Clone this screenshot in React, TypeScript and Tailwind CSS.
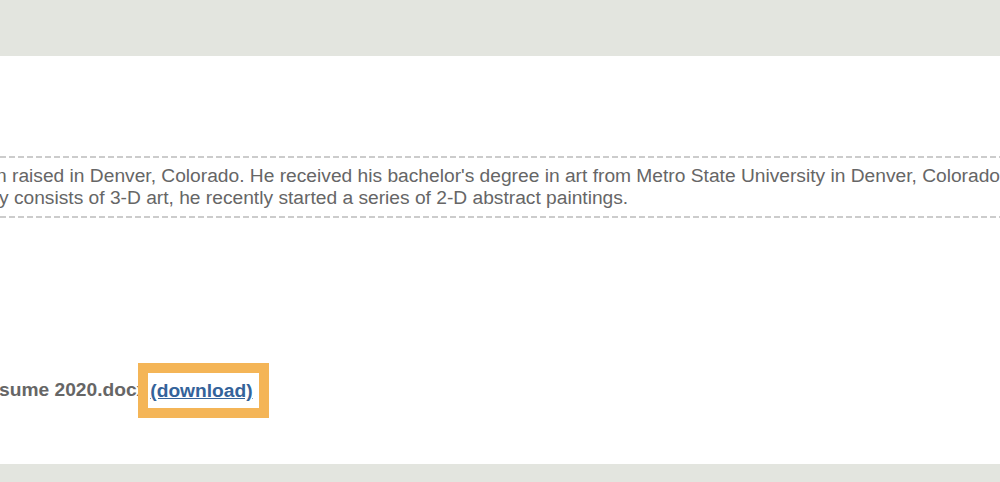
import React from 'react';

export default function App() {
  return (
    <div className="flex h-[482px] w-[1000px] flex-col overflow-hidden bg-[#e3e5df] font-['Liberation_Sans',Arial,sans-serif] text-[#666666]">
      <div className="h-[56px] shrink-0" />
      <div className="flex h-[408px] shrink-0 flex-col overflow-hidden bg-white">
        <div className="h-[100px] shrink-0" />
        <div className="h-[2px] bg-[repeating-linear-gradient(90deg,#cccccc_0_6px,transparent_6px_9px)]" />
        <div className="py-[7px] text-[19.2px] leading-[22px]">
          <div className="-ml-[4px] whitespace-nowrap">
            n raised in Denver, Colorado. He received his bachelor's degree in art from Metro State University in Denver, Colorado.
          </div>
          <div className="-ml-[1px] whitespace-nowrap">
            y consists of 3-D art, he recently started a series of 2-D abstract paintings.
          </div>
        </div>
        <div className="h-[2px] bg-[repeating-linear-gradient(90deg,#cccccc_0_6px,transparent_6px_9px)]" />
        <div className="mt-[145px] flex items-center whitespace-nowrap text-[19.2px] font-bold">
          <span className="-ml-[1px]">sume 2020.docx</span>
          <span className="-ml-[9px] border-[10px] border-[#f4b557] bg-white pl-[2px] pr-[6px] leading-[35px]">
            <a href="#" className="text-[#34639a] underline">(download)</a>
          </span>
        </div>
      </div>
    </div>
  );
}
